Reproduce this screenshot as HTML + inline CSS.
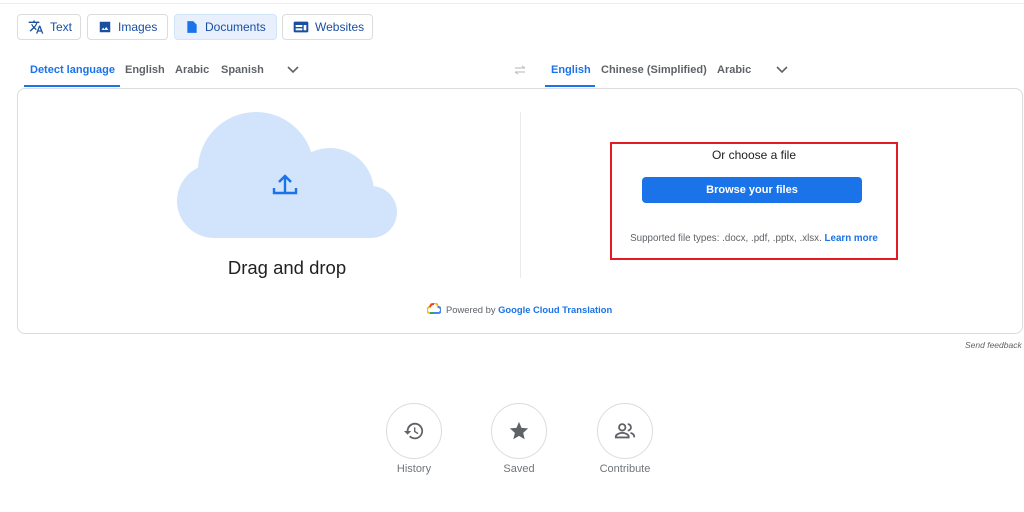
<!DOCTYPE html>
<html><head><style>
body{margin:0;width:1024px;height:512px;background:#fff;font-family:"Liberation Sans",sans-serif;position:relative;overflow:hidden;color:#3c4043}
.a{position:absolute}
.btn{position:absolute;top:14px;height:26px;border:1px solid #dadce0;border-radius:4px;box-sizing:border-box;font-size:12px;color:#1a4fa0;display:flex;align-items:center;padding-left:10px}
.btn svg{margin-right:6px}
.tab{position:absolute;top:64px;font-size:11px;color:#5f6368;font-weight:bold}
.circ{position:absolute;top:403px;width:56px;height:56px;border:1px solid #dadce0;border-radius:50%;box-sizing:border-box;display:flex;align-items:center;justify-content:center}
.lab{position:absolute;top:462px;font-size:11px;color:#70757a;width:80px;text-align:center}
</style></head><body>
<div class="a" style="left:0;top:0;width:1024px;height:3px;border-bottom:1px solid #eee"></div>
<div class="btn" style="left:17px;width:64px"><svg width="16" height="16" viewBox="0 0 24 24"><path fill="#1a4fa0" d="M12.9 15.1l-2.5-2.5v0c1.7-1.9 3-4.2 3.7-6.6H17V4h-7V2H8v2H1v2h11.2c-.7 2-1.7 3.8-3.2 5.4-1-1.1-1.8-2.3-2.4-3.5h-2c.7 1.600 1.7 3.2 3 4.6L2.5 17.5 4 19l5-5 3.1 3.1.8-2zM18.5 10h-2L12 22h2l1.1-3h4.8l1.1 3h2l-4.5-12zm-2.6 7l1.6-4.3 1.6 4.3h-3.2z"/></svg>Text</div>
<div class="btn" style="left:87px;width:81px"><svg width="14" height="14" viewBox="0 0 24 24"><path fill="#1a4fa0" d="M3 3h18v18H3z"/><path fill="#fff" d="M6 17l3-4 2 3 3-4 4 5z"/></svg>Images</div>
<div class="btn" style="left:174px;width:103px;background:#e8f0fe;border-color:#d2e3fc"><svg width="14" height="14" viewBox="0 0 24 24"><path fill="#1a73e8" d="M4 2h10l6 6v14H4z"/></svg>Documents</div>
<div class="btn" style="left:282px;width:91px"><svg width="16" height="14" viewBox="0 0 24 20"><rect x="1" y="2" width="22" height="16" rx="2" fill="#1a4fa0"/><rect x="4" y="7" width="10" height="3" fill="#fff"/><rect x="4" y="12" width="10" height="3" fill="#fff"/><rect x="16" y="7" width="4" height="8" fill="#fff"/></svg>Websites</div>
<div class="tab" style="left:30px;color:#1a73e8">Detect language</div>
<div class="a" style="left:24px;top:85px;width:96px;height:2px;background:#1a73e8"></div>
<div class="tab" style="left:125px">English</div>
<div class="tab" style="left:175px">Arabic</div>
<div class="tab" style="left:221px">Spanish</div>
<svg class="a" style="left:286px;top:64px" width="14" height="12" viewBox="0 0 14 12"><path d="M2 3l5 5 5-5" stroke="#5f6368" stroke-width="1.6" fill="none"/></svg>
<svg class="a" style="left:512px;top:64px" width="16" height="12" viewBox="0 0 16 12"><path d="M3 4h10M10 2l3 2M13 8H3M6 10L3 8" stroke="#c0c4c8" stroke-width="1.3" fill="none"/></svg>
<div class="tab" style="left:551px;color:#1a73e8">English</div>
<div class="a" style="left:545px;top:85px;width:50px;height:2px;background:#1a73e8"></div>
<div class="tab" style="left:601px">Chinese (Simplified)</div>
<div class="tab" style="left:717px">Arabic</div>
<svg class="a" style="left:775px;top:64px" width="14" height="12" viewBox="0 0 14 12"><path d="M2 3l5 5 5-5" stroke="#5f6368" stroke-width="1.6" fill="none"/></svg>
<div class="a" style="left:17px;top:88px;width:1006px;height:246px;border:1px solid #dadce0;border-radius:8px;box-sizing:border-box"></div>
<div class="a" style="left:520px;top:112px;width:1px;height:166px;background:#e8eaed"></div>
<svg class="a" style="left:170px;top:105px" width="240" height="140" viewBox="170 105 240 140">
<g fill="#d2e3fc"><circle cx="256" cy="170" r="58"/><circle cx="214" cy="201" r="37"/><circle cx="330" cy="192" r="44"/><circle cx="371" cy="212" r="26"/><rect x="214" y="200" width="157" height="38"/></g>
<path d="M285 192v-15M279 182l6-6 6 6M274 188v5h22v-5" stroke="#1a73e8" stroke-width="2.4" fill="none"/>
</svg>
<div class="a" style="left:177px;top:257px;width:220px;text-align:center;font-size:18.5px;color:#202124">Drag and drop</div>
<div class="a" style="left:610px;top:142px;width:288px;height:118px;border:2px solid #e31b23;box-sizing:border-box"></div>
<div class="a" style="left:610px;top:148px;width:288px;text-align:center;font-size:12px;color:#202124">Or choose a file</div>
<div class="a" style="left:642px;top:177px;width:220px;height:26px;background:#1a73e8;border-radius:4px;color:#fff;font-size:11px;font-weight:bold;text-align:center;line-height:26px">Browse your files</div>
<div class="a" style="left:600px;top:233px;width:308px;text-align:center;font-size:9.8px;color:#5f6368">Supported file types: .docx, .pdf, .pptx, .xlsx. <b style="color:#1a73e8">Learn more</b></div>
<svg class="a" style="left:427px;top:303px" width="14" height="11" viewBox="0 0 14 11"><path d="M3 10a3 3 0 010-6 4 4 0 018 0 3 3 0 010 6z" fill="none" stroke="#fbbc04" stroke-width="2"/><path d="M3 10h8a3 3 0 000-6" fill="none" stroke="#4285f4" stroke-width="2"/><path d="M7 1a4 4 0 00-4 3" fill="none" stroke="#ea4335" stroke-width="2"/><path d="M3 10h4" stroke="#34a853" stroke-width="2"/></svg>
<div class="a" style="left:446px;top:304px;font-size:9.4px;color:#5f6368">Powered by <b style="color:#1a73e8">Google Cloud Translation</b></div>
<div class="a" style="left:965px;top:340px;font-size:8.5px;font-style:italic;color:#5f6368">Send feedback</div>
<div class="circ" style="left:386px"><svg width="22" height="22" viewBox="0 0 24 24"><path d="M13 3a9 9 0 00-9 9H1l4 4 4-4H6a7 7 0 112 5l-1.4 1.4A9 9 0 1013 3zm-1 5v5l4 2.5.8-1.3-3.3-2V8z" fill="#5f6368"/></svg></div>
<div class="circ" style="left:491px"><svg width="22" height="22" viewBox="0 0 24 24"><path d="M12 17.3L18.2 21l-1.6-7L22 9.2l-7.2-.6L12 2 9.2 8.6 2 9.2 7.5 14l-1.7 7z" fill="#5f6368"/></svg></div>
<div class="circ" style="left:597px"><svg width="24" height="22" viewBox="0 0 24 24"><circle cx="9" cy="8" r="3.5" fill="none" stroke="#5f6368" stroke-width="2"/><path d="M2 19v-1c0-2 4-4 7-4s7 2 7 4v1z" fill="none" stroke="#5f6368" stroke-width="2"/><path d="M15 4.5a3.5 3.5 0 010 7M18 14c2 .6 4 2 4 4v1" fill="none" stroke="#5f6368" stroke-width="2"/></svg></div>
<div class="lab" style="left:374px;top:463px">History</div>
<div class="lab" style="left:479px;top:463px">Saved</div>
<div class="lab" style="left:585px;top:463px">Contribute</div>
</body></html>
